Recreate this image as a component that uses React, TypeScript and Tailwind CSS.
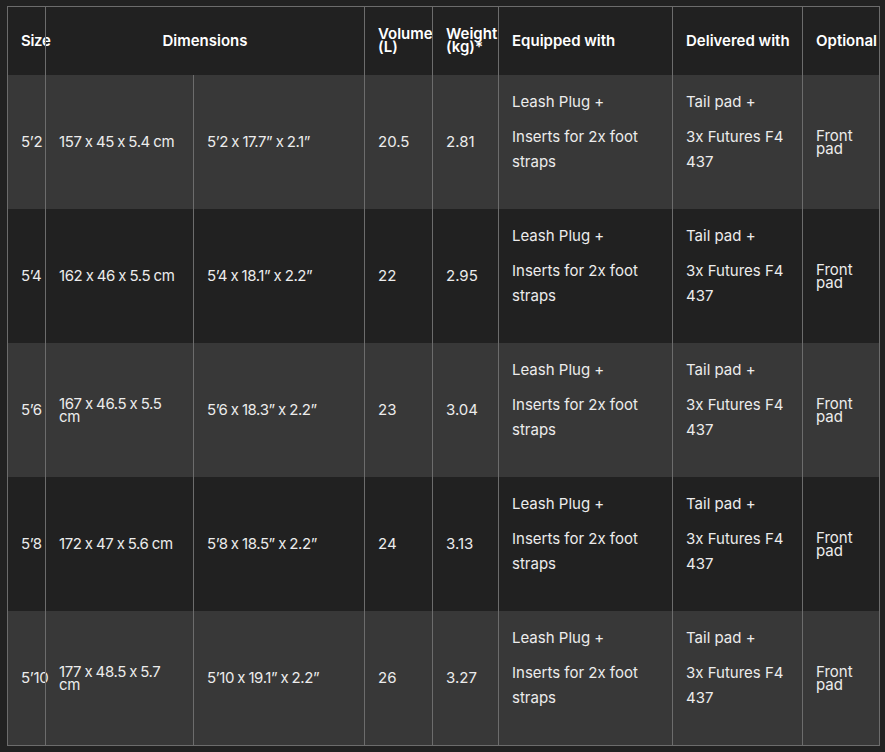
import React from "react";

const COLS = "grid grid-cols-[38px_148px_171px_68px_66px_174px_130px_78px]";
const LINE = "border-[#6c6c6c]";

type Row = {
  size: string;
  dim1: string[];
  dim2: string;
  vol: string;
  weight: string;
};

const rows: Row[] = [
  { size: "5’2", dim1: ["157 x 45 x 5.4 cm"], dim2: "5’2 x 17.7” x 2.1”", vol: "20.5", weight: "2.81" },
  { size: "5’4", dim1: ["162 x 46 x 5.5 cm"], dim2: "5’4 x 18.1” x 2.2”", vol: "22", weight: "2.95" },
  { size: "5’6", dim1: ["167 x 46.5 x 5.5", "cm"], dim2: "5’6 x 18.3” x 2.2”", vol: "23", weight: "3.04" },
  { size: "5’8", dim1: ["172 x 47 x 5.6 cm"], dim2: "5’8 x 18.5” x 2.2”", vol: "24", weight: "3.13" },
  { size: "5’10", dim1: ["177 x 48.5 x 5.7", "cm"], dim2: "5’10 x 19.1” x 2.2”", vol: "26", weight: "3.27" },
];

function Lines({ items, cls }: { items: string[]; cls: string }) {
  return (
    <div className={cls}>
      {items.map((t, i) => (
        <div key={i} className="whitespace-nowrap">
          {t}
        </div>
      ))}
    </div>
  );
}

function Cell({ children, last, className = "" }: { children: React.ReactNode; last?: boolean; className?: string }) {
  return (
    <div className={`${last ? "border-x" : "border-l"} ${LINE} pl-[13px] flex items-center ${className}`}>
      {children}
    </div>
  );
}

export default function App() {
  return (
    <div
      className="min-h-[752px] w-[885px] bg-[#222222] pl-[7px] pt-[6px] text-[15px] text-[#ececec] [font-feature-settings:'calt'_0]"
      style={{ fontFamily: "Inter, 'Open Sans', sans-serif" }}
    >
      <div className={`w-[873px] border-y ${LINE}`}>
        {/* header */}
        <div className={`${COLS} h-[68px] bg-[#212121] font-semibold text-white`}>
          <Cell>
            <span className="whitespace-nowrap tracking-[-0.3px]">Size</span>
          </Cell>
          <div className={`col-span-2 border-l ${LINE} flex items-center justify-center`}>
            <span>Dimensions</span>
          </div>
          <Cell>
            <Lines items={["Volume", "(L)"]} cls="leading-[13px] mt-[-2px]" />
          </Cell>
          <Cell>
            <Lines items={["Weight", "(kg)*"]} cls="leading-[13px] mt-[-2px]" />
          </Cell>
          <Cell>
            <span className="whitespace-nowrap">Equipped with</span>
          </Cell>
          <Cell>
            <span className="whitespace-nowrap">Delivered with</span>
          </Cell>
          <Cell last>
            <span className="whitespace-nowrap">Optional</span>
          </Cell>
        </div>

        {rows.map((r, i) => (
          <div key={i} className={`${COLS} h-[134px] ${i % 2 === 0 ? "bg-[#383838]" : "bg-[#212121]"}`}>
            <Cell>
              <span className="whitespace-nowrap tracking-[-0.3px]">{r.size}</span>
            </Cell>
            <Cell>
              <Lines
                items={r.dim1}
                cls={`tracking-[-0.4px] [word-spacing:-0.5px] ${r.dim1.length > 1 ? "leading-[13.5px]" : ""}`}
              />
            </Cell>
            <Cell>
              <span className="whitespace-nowrap tracking-[-0.4px] [word-spacing:-0.5px]">{r.dim2}</span>
            </Cell>
            <Cell>
              <span>{r.vol}</span>
            </Cell>
            <Cell>
              <span>{r.weight}</span>
            </Cell>
            <div className={`border-l ${LINE} pl-[13px] pt-[14px] flex flex-col gap-[10px] leading-[25px]`}>
              <div className="whitespace-nowrap">Leash Plug +</div>
              <Lines items={["Inserts for 2x foot", "straps"]} cls="" />
            </div>
            <div className={`border-l ${LINE} pl-[13px] pt-[14px] flex flex-col gap-[10px] leading-[25px]`}>
              <div className="whitespace-nowrap">Tail pad +</div>
              <Lines items={["3x Futures F4", "437"]} cls="" />
            </div>
            <Cell last>
              <Lines items={["Front", "pad"]} cls="leading-[13.5px]" />
            </Cell>
          </div>
        ))}
      </div>
    </div>
  );
}
